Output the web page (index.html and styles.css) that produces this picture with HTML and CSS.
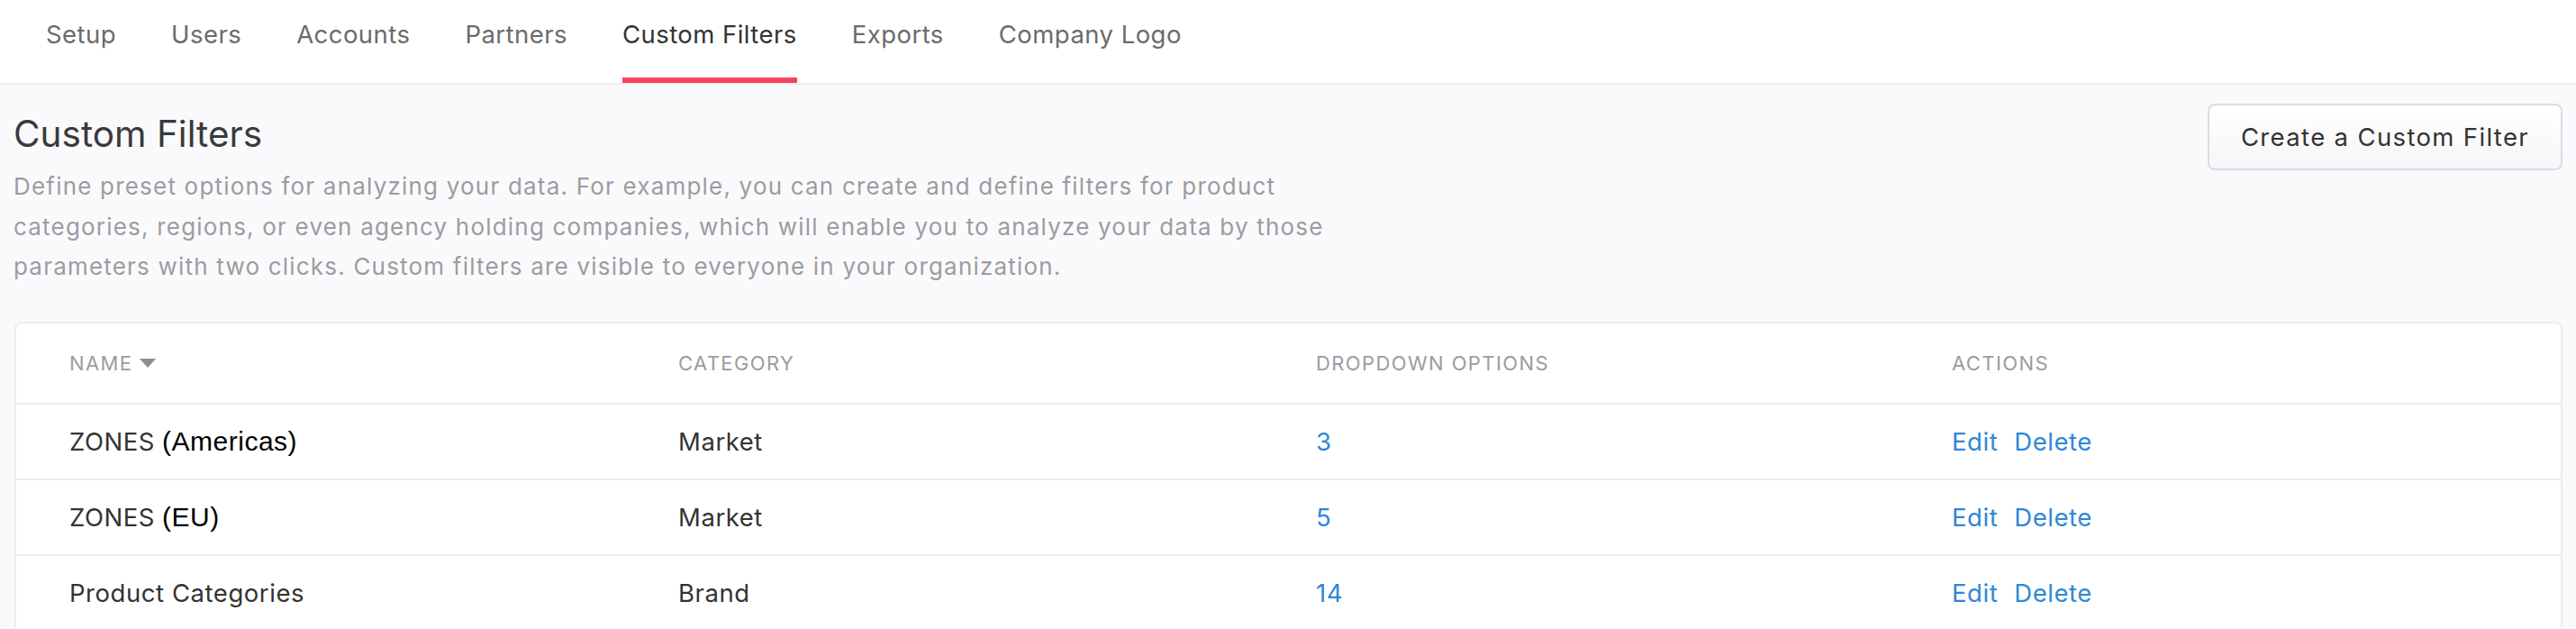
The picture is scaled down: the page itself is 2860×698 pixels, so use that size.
FILE: index.html
```html
<!DOCTYPE html>
<html lang="en">
<head>
<meta charset="utf-8">
<title>Custom Filters</title>
<link rel="stylesheet" href="styles.css">
</head>
<body>
<nav class="tabs">
  <a class="tab">Setup</a>
  <a class="tab">Users</a>
  <a class="tab">Accounts</a>
  <a class="tab">Partners</a>
  <a class="tab active">Custom Filters</a>
  <a class="tab">Exports</a>
  <a class="tab">Company Logo</a>
</nav>
<main class="page">
  <header class="page-head">
    <div class="intro">
      <h1 class="title">Custom Filters</h1>
      <p class="desc">Define preset options for analyzing your data. For example, you can create and define filters for product categories, regions, or even agency holding companies, which will enable you to analyze your data by those parameters with two clicks. Custom filters are visible to everyone in your organization.</p>
    </div>
    <button class="btn">Create a Custom Filter</button>
  </header>
  <section class="card">
    <div class="row head">
      <div class="cell">NAME<span class="sort"></span></div>
      <div class="cell">CATEGORY</div>
      <div class="cell">DROPDOWN OPTIONS</div>
      <div class="cell">ACTIONS</div>
    </div>
    <div class="row">
      <div class="cell">ZONES <span class="pasted">(Americas)</span></div>
      <div class="cell">Market</div>
      <div class="cell"><a class="link">3</a></div>
      <div class="cell actions"><a class="link">Edit</a><a class="link">Delete</a></div>
    </div>
    <div class="row">
      <div class="cell">ZONES <span class="pasted">(EU)</span></div>
      <div class="cell">Market</div>
      <div class="cell"><a class="link">5</a></div>
      <div class="cell actions"><a class="link">Edit</a><a class="link">Delete</a></div>
    </div>
    <div class="row">
      <div class="cell">Product Categories</div>
      <div class="cell">Brand</div>
      <div class="cell"><a class="link">14</a></div>
      <div class="cell actions"><a class="link">Edit</a><a class="link">Delete</a></div>
    </div>
  </section>
</main>
</body>
</html>
```

FILE: styles.css
```css
* { box-sizing: border-box; }
html, body { margin: 0; padding: 0; }
body {
  background: #fafafc;
  font-family: Inter, "Noto Sans", sans-serif;
  color: #333;
  overflow: hidden;
}
.tabs {
  display: flex;
  gap: 61px;
  padding-left: 51px;
  background: #fff;
  border-bottom: 2px solid #eceef3;
  height: 94px;
}
.tab {
  height: 92px;
  padding-top: 20px;
  line-height: 36px;
  font-size: 27.5px;
  letter-spacing: 0.45px;
  color: #6b6b6b;
  border-bottom: 6px solid transparent;
  cursor: pointer;
}
.tab.active {
  color: #333;
  border-bottom-color: #f5445b;
}
.page {
  padding: 0 15px;
}
.page-head {
  display: flex;
  justify-content: space-between;
  align-items: flex-start;
}
.intro { padding-top: 31px; }
.title {
  margin: 0;
  font-size: 40.5px;
  line-height: 48px;
  font-weight: 400;
  color: #3a3a3c;
}
.desc {
  margin: 12px 0 0;
  max-width: 1500px;
  font-size: 26px;
  letter-spacing: 1.2px;
  line-height: 44.5px;
  color: #9b9ca1;
}
.btn {
  margin-top: 21px;
  height: 74px;
  padding: 0 35px;
  font-family: inherit;
  font-size: 27.5px;
  letter-spacing: 1.35px;
  color: #333;
  background: linear-gradient(#ffffff, #f6f6f8);
  border: 2px solid #d9dce6;
  border-radius: 8px;
}
.card {
  margin: 38px 0 0 1px;
  background: #fff;
  border: 2px solid #eceef3;
  border-radius: 8px;
}
.row {
  display: grid;
  grid-template-columns: 676px 708px 706px 1fr;
  padding-left: 59px;
  align-items: center;
  height: 84px;
  border-bottom: 2px solid #eaecf1;
  font-size: 27.5px;
  letter-spacing: 0.55px;
  color: #333;
}
.row.head {
  height: 90px;
  font-size: 22px;
  letter-spacing: 1.4px;
  color: #9b9ca1;
}
.cell { display: flex; align-items: center; }
.sort {
  display: inline-block;
  margin-left: 8px;
  width: 0;
  height: 0;
  border-left: 9px solid transparent;
  border-right: 9px solid transparent;
  border-top: 10px solid #8e8e8e;
}
.pasted {
  font-family: "Liberation Sans", Arial, sans-serif;
  font-size: 30px;
  letter-spacing: 0.5px;
  color: #000;
  margin-left: 8px;
}
.link { color: #2f87d6; cursor: pointer; }
.actions { gap: 18px; }
```
